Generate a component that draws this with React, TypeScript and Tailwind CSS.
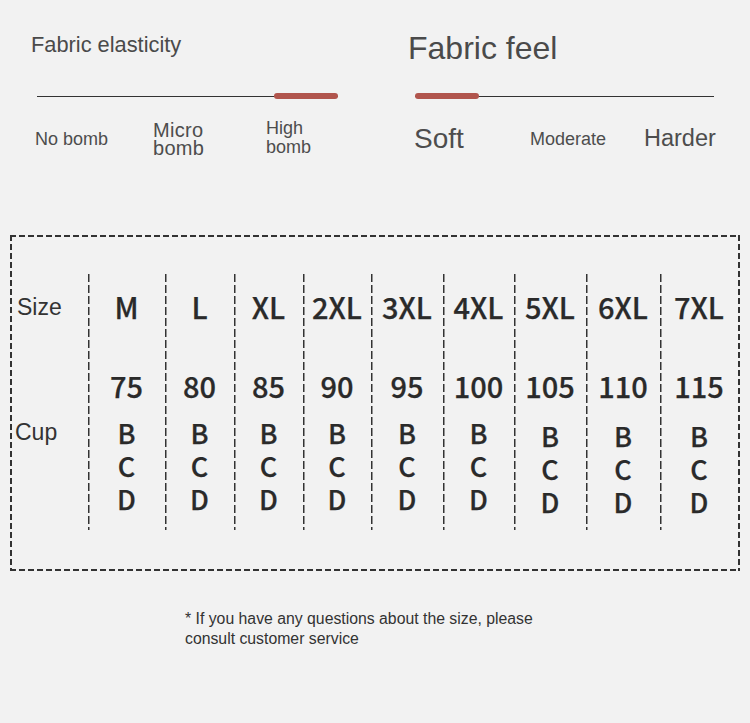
import React from "react";

const sizes = [
  { s: "M", n: "75", w: "w-[77px]", shift: false },
  { s: "L", n: "80", w: "w-[69px]", shift: false },
  { s: "XL", n: "85", w: "w-[69px]", shift: false },
  { s: "2XL", n: "90", w: "w-[68px]", shift: false },
  { s: "3XL", n: "95", w: "w-[72px]", shift: false },
  { s: "4XL", n: "100", w: "w-[71px]", shift: false },
  { s: "5XL", n: "105", w: "w-[72px]", shift: true },
  { s: "6XL", n: "110", w: "w-[74px]", shift: true },
  { s: "7XL", n: "115", w: "w-[78px]", shift: true },
];

const sans = "font-['Liberation_Sans',Arial,sans-serif]";
const cjk = "font-['Noto_Sans_CJK_SC','Noto_Sans',sans-serif]";

function Track({ side, width }: { side: "left" | "right"; width: string }) {
  return (
    <div className={`relative h-[6px] ${width}`}>
      <div className="absolute left-0 right-0 top-[2.5px] h-[1px] bg-[#333]" />
      <div
        className={`absolute top-0 h-[6px] w-[64px] rounded-full bg-[#b1554d] ${
          side === "right" ? "right-0" : "left-0"
        }`}
      />
    </div>
  );
}

export default function App() {
  return (
    <div className={`h-[723px] w-[750px] overflow-hidden bg-[#f2f2f2] ${sans}`}>
      {/* top section */}
      <div className="flex h-[159px]">
        <div className="flex w-[377px] flex-col">
          <div className="h-[93px] pl-[31px] pt-[34px] text-[21.8px] leading-none text-[#4a4a4a]">
            Fabric elasticity
          </div>
          <div className="pl-[37px]">
            <Track side="right" width="w-[301px]" />
          </div>
          <div className="mt-[20px] flex h-[40px] items-center pl-[35px] text-[#4d4d4d]">
            <div className="w-[118px] text-[18px] leading-none">No bomb</div>
            <div className="w-[113px] text-[20px] leading-[18px] tracking-[0.3px]">
              Micro
              <br />
              bomb
            </div>
            <div className="-mt-[2px] text-[18px] leading-[19px]">
              High
              <br />
              bomb
            </div>
          </div>
        </div>
        <div className="flex flex-1 flex-col">
          <div className="h-[93px] pl-[31px] pt-[32px] text-[32px] leading-none text-[#4a4a4a]">
            Fabric feel
          </div>
          <div className="pl-[38px]">
            <Track side="left" width="w-[299px]" />
          </div>
          <div className="mt-[20px] flex h-[40px] items-center pl-[37px] text-[#4d4d4d]">
            <div className="w-[116px] text-[28px] leading-none">Soft</div>
            <div className="w-[114px] text-[18px] leading-none">Moderate</div>
            <div className="text-[23.5px] leading-none">Harder</div>
          </div>
        </div>
      </div>

      {/* table box */}
      <div className="ml-[10px] mt-[76px] flex h-[336px] w-[730px] p-[2px] pt-[39px] [background-image:repeating-linear-gradient(90deg,#333_0_6px,transparent_6px_9px),repeating-linear-gradient(90deg,#333_0_6px,transparent_6px_9px),repeating-linear-gradient(180deg,#333_0_6px,transparent_6px_9px),repeating-linear-gradient(180deg,#333_0_6px,transparent_6px_9px)] [background-size:100%_2px,100%_2px,2px_100%,2px_100%] [background-position:0_0,0_100%,0_0,100%_0] bg-no-repeat">
        <div className="flex h-[256px] w-[76px] flex-col pl-[5px] text-[23px] text-[#333]">
          <div className="mt-[17px] h-[33px] leading-[33px]">Size</div>
          <div className="mt-[92px] h-[33px] leading-[33px] -ml-[2px]">Cup</div>
        </div>
        {sizes.map((c) => (
          <div
            key={c.s}
            className={`flex h-[256px] flex-col items-center ${c.w} ${cjk} font-medium text-[#2a2a2a] [-webkit-text-stroke:0.25px_#2a2a2a] [background-image:repeating-linear-gradient(180deg,#333_0_8px,transparent_8px_11px)] [background-size:1.5px_100%] bg-no-repeat`}
          >
            <div className="mt-[16px] h-[33px] text-[29px] leading-[33px]">{c.s}</div>
            <div className="mt-[46px] h-[33px] text-[29px] leading-[33px]">{c.n}</div>
            <div
              className={`flex flex-col items-center text-[27px] leading-[33px] ${
                c.shift ? "mt-[17px]" : "mt-[14px]"
              }`}
            >
              <div className="h-[33px]">B</div>
              <div className="h-[33px]">C</div>
              <div className="h-[33px]">D</div>
            </div>
          </div>
        ))}
      </div>

      {/* footnote */}
      <div className="ml-[185px] mt-[38px] w-[360px] text-[15.8px] leading-[20px] text-[#333]">
        * If you have any questions about the size, please consult customer service
      </div>
    </div>
  );
}
